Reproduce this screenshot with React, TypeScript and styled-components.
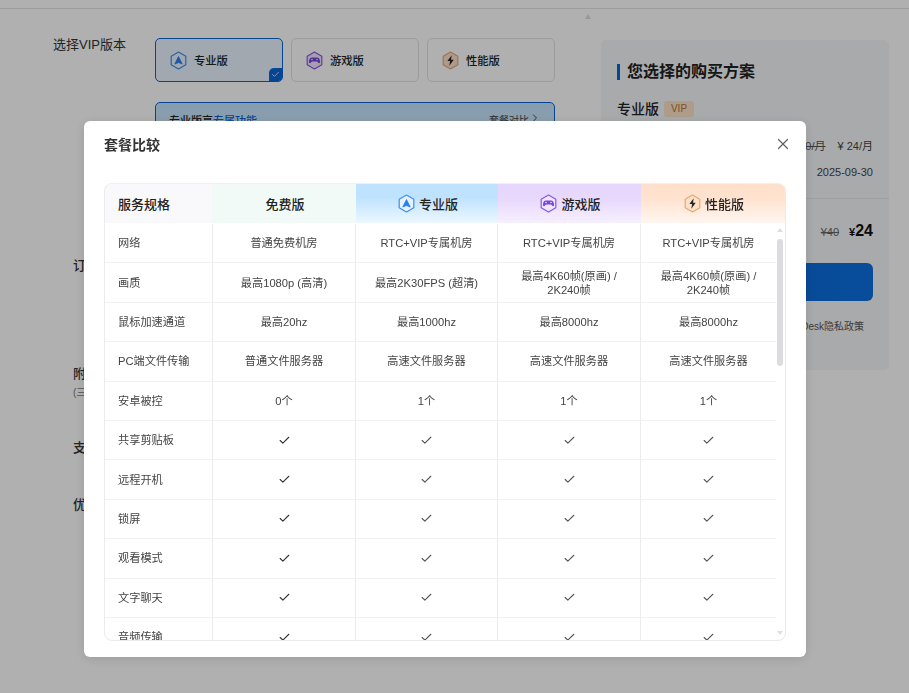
import React from 'react';
import styled, { createGlobalStyle } from 'styled-components';
import { Check, X, ChevronRight } from 'lucide-react';

const Global = createGlobalStyle`
  html, body { margin: 0; padding: 0; background: #fff; overflow: hidden; }
  body { font-family: "Liberation Sans", "Noto Sans CJK SC", sans-serif; color: #333; }
  * { box-sizing: border-box; }
`;

const Page = styled.div`
  width: 909px;
  height: 693px;
  overflow: hidden;
`;
const TopBar = styled.div`
  height: 9px;
  border-bottom: 1px solid #e4e4e4;
`;
const Main = styled.div`
  display: flex;
  align-items: flex-start;
  padding: 29px 20px 0 53px;
`;
const LeftCol = styled.div`
  width: 502px;
  flex: none;
`;
const PlanRow = styled.div`
  display: flex;
  align-items: flex-start;
`;
const PlanLabel = styled.div`
  width: 102px;
  font-size: 13px;
  line-height: 14px;
  color: #333;
`;
const PlanCards = styled.div`
  display: flex;
  gap: 8px;
`;
const PlanCard = styled.div<{ $active?: boolean }>`
  position: relative;
  width: 128px;
  height: 44px;
  border-radius: 5px;
  border: 1px solid ${p => (p.$active ? '#0a64d6' : '#e3e3e6')};
  background: ${p => (p.$active ? '#e9f3ff' : '#fff')};
  display: flex;
  align-items: center;
  gap: 7px;
  padding-left: 14px;
  font-size: 11.3px;
  font-weight: 500;
  color: #222;
  overflow: hidden;
`;
const CardTick = styled.div`
  position: absolute;
  right: 0;
  bottom: 0;
  width: 13px;
  height: 13px;
  background: #0a64d6;
  border-top-left-radius: 5px;
  color: #fff;
  display: flex;
  align-items: center;
  justify-content: center;
`;
const FeatureBox = styled.div`
  margin: 20px 0 0 102px;
  width: 400px;
  height: 120px;
  border: 1px solid #0a64d6;
  border-radius: 5px;
  background: linear-gradient(180deg, #c3e4fc, #e9f3ff);
  display: flex;
  justify-content: space-between;
  padding: 9px 13px;
  font-size: 11px;
  font-weight: 500;
  color: #222;
`;
const Accent = styled.span`
  color: #0a64d6;
`;
const CompareLink = styled.span`
  display: flex;
  align-items: flex-start;
  font-weight: 400;
  font-size: 10px;
  color: #444;
`;
const SideLabels = styled.div`
  padding: 0 0 0 20px;
`;
const SideLabel = styled.div<{ $top: number }>`
  margin-top: ${p => p.$top}px;
  font-size: 13px;
  line-height: 16px;
  font-weight: 500;
  color: #333;
`;
const SideNote = styled.div`
  margin-top: 4px;
  font-size: 10px;
  line-height: 14px;
  color: #777;
`;
const Arrow = styled.div`
  width: 0;
  height: 0;
  margin: -24px 0 0 30px;
  border-left: 3.5px solid transparent;
  border-right: 3.5px solid transparent;
  border-bottom: 5px solid #dcdcdc;
  flex: none;
`;
const Panel = styled.aside`
  width: 288px;
  height: 330px;
  flex: none;
  margin: 2px 0 0 10px;
  background: #f5f7fa;
  border-radius: 5px;
  padding: 21px 16px 0;
`;
const PanelTitle = styled.div`
  display: flex;
  align-items: center;
  gap: 7px;
  font-size: 16px;
  line-height: 21px;
  font-weight: 700;
  color: #222;
  &::before {
    content: '';
    width: 3px;
    height: 16px;
    background: #0a64d6;
  }
`;
const Version = styled.div`
  display: flex;
  align-items: center;
  gap: 5px;
  margin-top: 17px;
  font-size: 14px;
  line-height: 20px;
  font-weight: 500;
  color: #222;
`;
const Vip = styled.span`
  width: 30px;
  height: 16px;
  background: #fde3c8;
  color: #b2753f;
  border-radius: 3px;
  font-size: 10px;
  line-height: 16px;
  text-align: center;
`;
const PanelLine = styled.div<{ $top: number }>`
  display: flex;
  justify-content: flex-end;
  gap: 12px;
  margin-top: ${p => p.$top}px;
  font-size: 11px;
  line-height: 14px;
  color: #444;
`;
const Struck = styled.s`
  color: #555;
`;
const Divider = styled.div`
  margin: 19px -16px 0;
  border-top: 1px solid #e4e6ea;
`;
const PriceLine = styled.div`
  display: flex;
  justify-content: flex-end;
  align-items: baseline;
  gap: 10px;
  margin-top: 22px;
  font-size: 11px;
  line-height: 20px;
  color: #666;
`;
const Price = styled.b`
  color: #111;
  font-size: 11px;
  & > span { font-size: 16px; }
`;
const BuyButton = styled.div`
  height: 38px;
  margin-top: 21px;
  border-radius: 6px;
  background: linear-gradient(90deg, #0964d4, #0c70e0);
`;
const Policy = styled.div`
  margin: 19px 9px 0 0;
  text-align: right;
  font-size: 10px;
  line-height: 14px;
  color: #555;
`;

const Overlay = styled.div`
  position: fixed;
  inset: 0;
  background: rgba(0, 0, 0, 0.31);
`;
const Modal = styled.div`
  position: absolute;
  left: 84px;
  top: 121px;
  width: 722px;
  height: 536px;
  background: #fff;
  border-radius: 6px;
  box-shadow: 0 2px 12px rgba(0, 0, 0, 0.12);
  padding: 0 20px;
`;
const ModalHead = styled.div`
  height: 62px;
  display: flex;
  align-items: flex-start;
  justify-content: space-between;
  padding-top: 15px;
  font-size: 14px;
  line-height: 18px;
  font-weight: 700;
  color: #333;
`;
const CloseBtn = styled.span`
  color: #5f6368;
  display: flex;
  margin: -1px -5.5px 0 0;
`;
const Table = styled.div`
  position: relative;
  width: 682px;
  height: 458px;
  border: 1px solid #ebebeb;
  border-top-color: #f0f0f2;
  border-bottom-color: #ececec;
  border-radius: 8px;
  overflow: hidden;
`;
const HeadRow = styled.div`
  display: grid;
  grid-template-columns: 107px 144px 142px 143px 144px;
  height: 39px;
  margin-bottom: 1px;
`;
const HeadCell = styled.div<{ $bg: string; $left?: boolean }>`
  display: flex;
  align-items: center;
  justify-content: ${p => (p.$left ? 'flex-start' : 'center')};
  gap: 4px;
  padding-left: ${p => (p.$left ? '13px' : '2px')};
  background: ${p => p.$bg};
  font-size: 13px;
  font-weight: 500;
  color: #222;
`;
const Row = styled.div`
  display: grid;
  grid-template-columns: 108px 143px 142px 143px 135px;
  width: 671px;
  height: 39.4px;
  border-bottom: 1px solid #f1f1f1;
`;
const Cell = styled.div<{ $left?: boolean }>`
  display: flex;
  align-items: center;
  justify-content: ${p => (p.$left ? 'flex-start' : 'center')};
  text-align: ${p => (p.$left ? 'left' : 'center')};
  padding: ${p => (p.$left ? '0 0 0 13px' : '0 12px')};
  border-right: 1px solid #ececec;
  font-size: 11.2px;
  line-height: 14px;
  color: #444;
  &:last-child { border-right: 0; }
`;
const Track = styled.div`
  position: absolute;
  right: 0;
  top: 39px;
  bottom: 0;
  width: 10px;
`;
const TrackUp = styled.div`
  position: absolute;
  top: 5px;
  left: 2px;
  border-left: 3px solid transparent;
  border-right: 3px solid transparent;
  border-bottom: 4px solid #dedede;
`;
const TrackDown = styled.div`
  position: absolute;
  bottom: 5px;
  left: 2px;
  border-left: 3px solid transparent;
  border-right: 3px solid transparent;
  border-top: 4px solid #dedede;
`;
const Thumb = styled.div`
  position: absolute;
  top: 16px;
  left: 2px;
  width: 6px;
  height: 127px;
  border-radius: 3px;
  background: #dcdcdf;
`;

const Hex = ({ stroke, fill, children }: { stroke: string; fill: string; children: React.ReactNode }) => (
  <svg width="17" height="19" viewBox="0 0 17 19" fill="none">
    <path d="M8.5 1 15.8 5.2v8.6L8.5 18 1.2 13.8V5.2Z" fill={fill} stroke={stroke} strokeWidth="1.2" strokeLinejoin="round" />
    {children}
  </svg>
);
const ProIcon = () => (
  <Hex stroke="#3c8ef3" fill="#e6f3ff">
    <path d="M8.500 5.500 12.200 13 8.500 11.600 4.800 13Z" fill="#2a7ff0" stroke="#2a7ff0" strokeWidth=".8" strokeLinejoin="round" />
  </Hex>
);
const GameIcon = () => (
  <Hex stroke="#8b55e6" fill="#f0e7ff">
    <path d="M5.800 6.400h5.400c1.400 0 2.200 1 2.500 2.400l.4 2c.2 1.300-1.300 1.800-2.100.8l-.9-1H5.900l-.9 1c-.8 1-2.300.5-2.100-.8l.4-2c.3-1.400 1.100-2.400 2.500-2.400Z" fill="#7a45d8" />
    <circle cx="6" cy="8.500" r=".8" fill="#f0e7ff" />
    <circle cx="11" cy="8.500" r=".8" fill="#f0e7ff" />
  </Hex>
);
const PerfIcon = () => (
  <Hex stroke="#eaa873" fill="#fde0c8">
    <path d="M9.700 4.300 5.400 10h2.700l-.8 4.700L11.700 8.800H9Z" fill="#222" />
  </Hex>
);

const rows: [string, string, string, string, string][] = [
  ['网络', '普通免费机房', 'RTC+VIP专属机房', 'RTC+VIP专属机房', 'RTC+VIP专属机房'],
  ['画质', '最高1080p (高清)', '最高2K30FPS (超清)', '最高4K60帧(原画) / 2K240帧', '最高4K60帧(原画) / 2K240帧'],
  ['鼠标加速通道', '最高20hz', '最高1000hz', '最高8000hz', '最高8000hz'],
  ['PC端文件传输', '普通文件服务器', '高速文件服务器', '高速文件服务器', '高速文件服务器'],
  ['安卓被控', '0个', '1个', '1个', '1个'],
];
const checkRows = ['共享剪贴板', '远程开机', '锁屏', '观看模式', '文字聊天', '音频传输'];

const Tick = ({ dark }: { dark?: boolean }) => (
  <Check size={13} strokeWidth={2} color={dark ? '#333' : '#555'} />
);

export default function App() {
  return (
    <Page>
      <Global />
      <TopBar />
      <Main>
        <LeftCol>
          <PlanRow>
            <PlanLabel>选择VIP版本</PlanLabel>
            <PlanCards>
              <PlanCard $active>
                <ProIcon />专业版
                <CardTick><Check size={9} strokeWidth={2} /></CardTick>
              </PlanCard>
              <PlanCard><GameIcon />游戏版</PlanCard>
              <PlanCard><PerfIcon />性能版</PlanCard>
            </PlanCards>
          </PlanRow>
          <FeatureBox>
            <span>专业版享<Accent>专属功能</Accent></span>
            <CompareLink>套餐对比<ChevronRight size={12} /></CompareLink>
          </FeatureBox>
          <SideLabels>
            <SideLabel $top={36}>订</SideLabel>
            <SideLabel $top={92}>附</SideLabel>
            <SideNote>(三</SideNote>
            <SideLabel $top={40}>支</SideLabel>
            <SideLabel $top={41}>优</SideLabel>
          </SideLabels>
        </LeftCol>
        <Arrow />
        <Panel>
          <PanelTitle>您选择的购买方案</PanelTitle>
          <Version>专业版<Vip>VIP</Vip></Version>
          <PanelLine $top={20}><Struck>0/月</Struck><span>¥ 24/月</span></PanelLine>
          <PanelLine $top={12}>2025-09-30</PanelLine>
          <Divider />
          <PriceLine><s>¥40</s><Price>¥<span>24</span></Price></PriceLine>
          <BuyButton />
          <Policy>Desk隐私政策</Policy>
        </Panel>
      </Main>
      <Overlay>
        <Modal>
          <ModalHead>
            套餐比较
            <CloseBtn><X size={18} strokeWidth={1.6} /></CloseBtn>
          </ModalHead>
          <Table>
            <HeadRow>
              <HeadCell $left $bg="#f9f9fb">服务规格</HeadCell>
              <HeadCell $bg="#f1faf7">免费版</HeadCell>
              <HeadCell $bg="linear-gradient(180deg,#bfe3ff 0%,#bfe3ff 35%,#ecf7ff 100%)"><ProIcon />专业版</HeadCell>
              <HeadCell $bg="linear-gradient(180deg,#e6d5fd 0%,#e8d9fd 40%,#f6f0fe 100%)"><GameIcon />游戏版</HeadCell>
              <HeadCell $bg="linear-gradient(180deg,#ffdfca 0%,#ffe3d0 40%,#fff6f0 100%)"><PerfIcon />性能版</HeadCell>
            </HeadRow>
            {rows.map(r => (
              <Row key={r[0]}>
                <Cell $left>{r[0]}</Cell>
                {r.slice(1).map((t, i) => <Cell key={i}>{t}</Cell>)}
              </Row>
            ))}
            {checkRows.map(name => (
              <Row key={name}>
                <Cell $left>{name}</Cell>
                <Cell><Tick dark /></Cell>
                <Cell><Tick /></Cell>
                <Cell><Tick /></Cell>
                <Cell><Tick /></Cell>
              </Row>
            ))}
            <Track>
              <TrackUp />
              <Thumb />
              <TrackDown />
            </Track>
          </Table>
        </Modal>
      </Overlay>
    </Page>
  );
}
